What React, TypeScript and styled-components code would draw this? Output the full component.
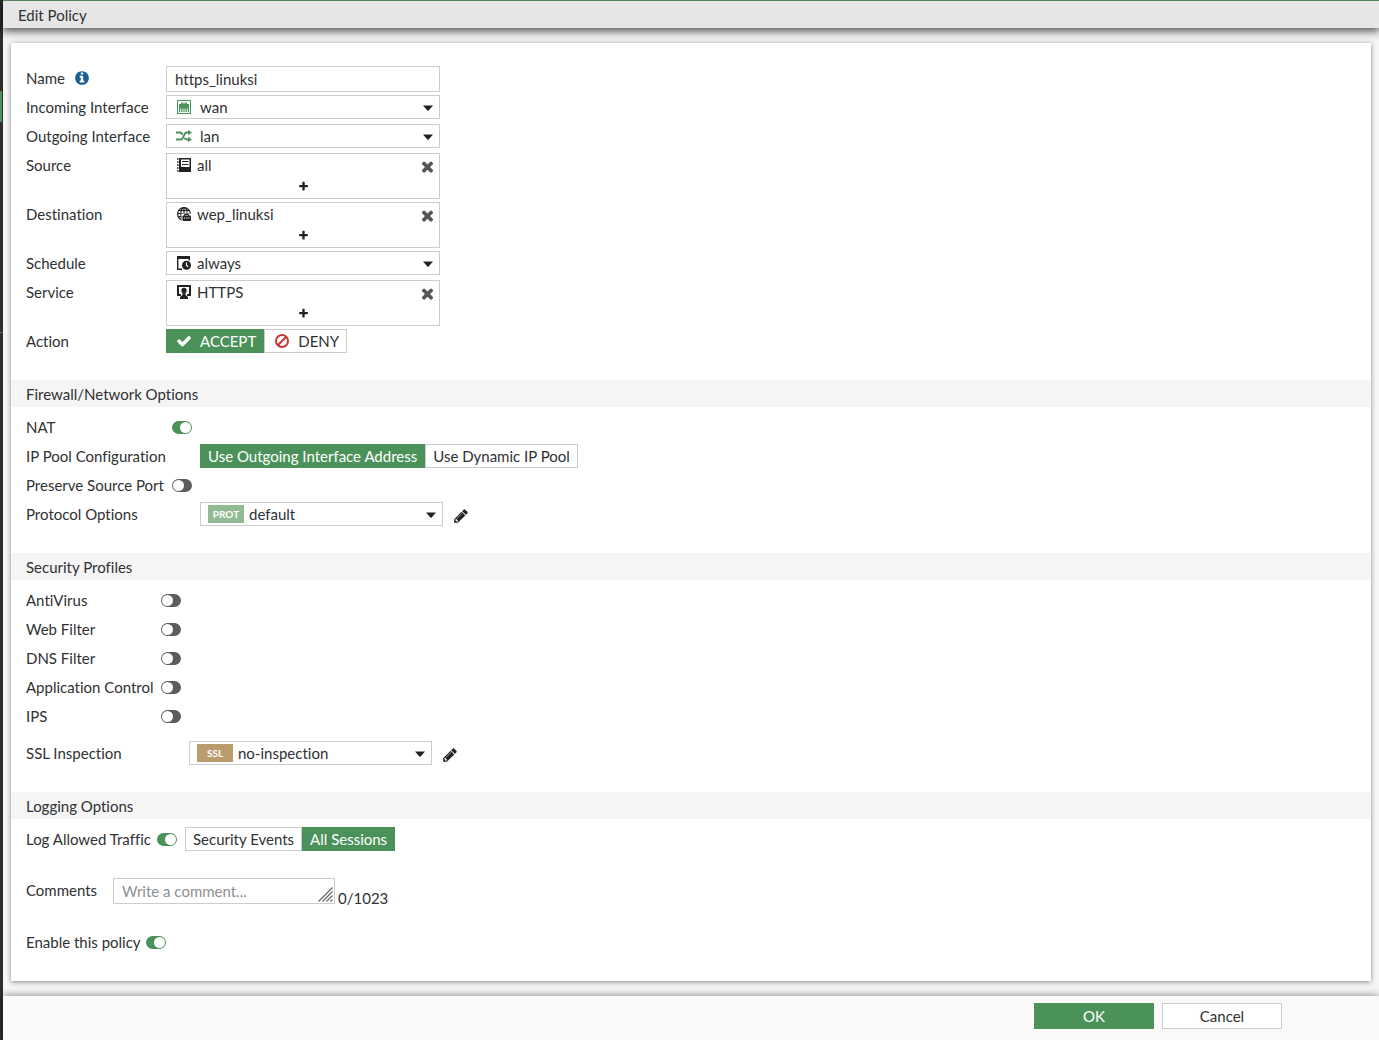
import React, { useState } from "react";
import styled, { createGlobalStyle, css } from "styled-components";

const color = {
  text: "#2f3133",
  green: "#4a925a",
  border: "#cccccc",
  off: "#5c5c5c",
};

const GlobalStyle = createGlobalStyle`
  *, *::before, *::after { box-sizing: border-box; }
  body {
    margin: 0;
    background: #f6f6f6;
    color: ${color.text};
    font: 15px/24px Lato, "Liberation Sans", sans-serif;
    font-variant-ligatures: none;
  }
  button, input, select, textarea { font: inherit; color: inherit; }
`;

const Shell = styled.div`
  display: flex;
  min-height: 100vh;
`;

const Rail = styled.nav`
  flex: none;
  width: 3px;
  padding-top: 91px;
  background: #2d2d2d;
`;

const RailMarker = styled.div`
  width: 2px;
  height: 31px;
  background: ${color.green};
`;

const RailDivider = styled.div`
  width: 2px;
  height: 1px;
  margin-top: 210px;
  background: #777;
`;

const Page = styled.div`
  flex: 1;
  min-width: 0;
  display: flex;
  flex-direction: column;
`;

const Header = styled.header`
  height: 28px;
  padding: 2px 15px;
  border-top: 1px solid #54845f;
  background: #e6e6e6;
  box-shadow: 0 2px 10px 1px rgba(0, 0, 0, 0.7);
  z-index: 1;
`;

const Title = styled.h1`
  margin: 0;
  font-size: 15px;
  font-weight: 400;
`;

const Main = styled.main`
  flex: 1;
  padding: 15px 8px;
`;

const Card = styled.form`
  padding-top: 23px;
  background: #fff;
  box-shadow: 0 1px 5px rgba(0, 0, 0, 0.45);
`;

const Section = styled.section`
  padding: 0 15px 22px;
`;

const SectionTitle = styled.h2`
  margin: 0 -15px 8px;
  padding: 2px 15px 1px;
  background: #f5f5f5;
  font-size: 15px;
  font-weight: 400;
`;

const Row = styled.div<{ $before?: number }>`
  display: flex;
  align-items: flex-start;
  min-height: 29px;
  padding-bottom: 3px;
  margin-top: ${(p) => p.$before ?? 0}px;
`;

const labelStyle = css<{ $width: number }>`
  flex: none;
  width: ${(p) => p.$width}px;
  white-space: nowrap;
`;

const Label = styled.label<{ $width: number }>`
  ${labelStyle}
`;

const Caption = styled.span<{ $width: number }>`
  ${labelStyle}
`;

const InfoButton = styled.button`
  display: inline-flex;
  margin-left: 9px;
  padding: 0;
  border: 0;
  background: none;
  color: #1d5f94;
  vertical-align: -2px;
`;

const TextInput = styled.input`
  width: 274px;
  height: 26px;
  padding: 0 8px;
  border: 1px solid ${color.border};
  background: #fff;
  outline: 0;
`;

const SelectBox = styled.div<{ $width: number; $gap: number }>`
  display: flex;
  align-items: center;
  gap: ${(p) => p.$gap}px;
  width: ${(p) => p.$width}px;
  height: 24px;
  padding: 0 6px 0 7px;
  border: 1px solid ${color.border};
  background: #fff;

  select {
    flex: 1;
    min-width: 0;
    height: 22px;
    padding: 0;
    border: 0;
    background: none;
    line-height: 20px;
    appearance: none;
    outline: 0;
  }
`;

const IconSlot = styled.span`
  flex: none;
  display: flex;
  justify-content: center;
  width: 20px;
`;

const PickBox = styled.div`
  width: 274px;
  height: 46px;
  padding: 0 3px 0 7px;
  border: 1px solid ${color.border};
  background: #fff;
`;

const PickItem = styled.div`
  display: flex;
  align-items: center;
  gap: 3px;
  height: 22px;
`;

const PickName = styled.span`
  flex: 1;
`;

const IconButton = styled.button`
  display: flex;
  align-items: center;
  justify-content: center;
  padding: 0;
  border: 0;
  background: none;
  cursor: pointer;
`;

const RemoveButton = styled(IconButton)`
  height: 22px;
  padding-top: 3px;
  color: #555;
`;

const AddButton = styled(IconButton)`
  width: 100%;
  height: 20px;
  padding-right: 4px;
  color: #222;
`;

const EditButton = styled(IconButton)`
  width: 16px;
  height: 26px;
  margin-left: 10px;
  padding-top: 2px;
  color: #222;
`;

const Toggle = styled.input`
  flex: none;
  appearance: none;
  width: 20px;
  height: 13px;
  margin: 6px 8px 0 0;
  padding: 1px;
  border-radius: 7px;
  background: ${color.off};

  &::before {
    content: "";
    display: block;
    width: 11px;
    height: 11px;
    border-radius: 50%;
    background: #fff;
  }

  &:checked {
    background: ${color.green};
  }

  &:checked::before {
    margin-left: auto;
  }
`;

const Segments = styled.div`
  display: flex;
`;

const Segment = styled.label<{ $active: boolean }>`
  display: flex;
  align-items: center;
  gap: 6px;
  height: 24px;
  padding: 0 7px;
  border: 1px solid ${(p) => (p.$active ? color.green : color.border)};
  background: ${(p) => (p.$active ? color.green : "#fff")};
  color: ${(p) => (p.$active ? "#fff" : color.text)};
  white-space: nowrap;
  cursor: pointer;

  input {
    appearance: none;
    position: absolute;
    margin: 0;
  }
`;

const Badge = styled.span<{ $fill: string }>`
  flex: none;
  width: 36px;
  height: 18px;
  background: ${(p) => p.$fill};
  color: #fff;
  font-size: 10px;
  font-weight: 700;
  line-height: 18px;
  text-align: center;
`;

const CommentBox = styled.div`
  position: relative;
  display: flex;
  margin-right: 3px;

  textarea {
    width: 222px;
    height: 26px;
    padding: 0 8px;
    border: 1px solid ${color.border};
    background: #fff;
    resize: none;
    outline: 0;
    overflow: hidden;
  }

  textarea::placeholder {
    color: #8f8f8f;
  }

  svg {
    position: absolute;
    right: 2px;
    bottom: 2px;
    pointer-events: none;
  }
`;

const Counter = styled.span`
  padding-top: 8px;
`;

const Footer = styled.footer`
  display: flex;
  justify-content: flex-end;
  gap: 8px;
  height: 44px;
  padding: 7px 97px 0 15px;
  background: #fafafa;
  box-shadow: 0 0 8px rgba(0, 0, 0, 0.5);
  z-index: 1;
`;

const FooterButton = styled.button<{ $primary?: boolean }>`
  width: 120px;
  height: 26px;
  padding: 0;
  border: 1px solid ${(p) => (p.$primary ? color.green : color.border)};
  background: ${(p) => (p.$primary ? color.green : "#fff")};
  color: ${(p) => (p.$primary ? "#fff" : color.text)};
  line-height: 24px;
`;

const CaretIcon = styled.svg`
  flex: none;
  margin-top: 2px;
`;

const Caret = () => (
  <CaretIcon width="10" height="6" viewBox="0 0 10 6" aria-hidden="true">
    <path d="M0 .5h10L5.600 5.400q-.6.6-1.200 0Z" fill="#222" />
  </CaretIcon>
);

const glyphs = {
  info: "M1152 1376v-160q0-14-9-23t-23-9h-96v-512q0-14-9-23t-23-9h-320q-14 0-23 9t-9 23v160q0 14 9 23t23 9h96v320h-96q-14 0-23 9t-9 23v160q0 14 9 23t23 9h448q14 0 23-9t9-23zm-128-896v-160q0-14-9-23t-23-9h-192q-14 0-23 9t-9 23v160q0 14 9 23t23 9h192q14 0 23-9t9-23zm640 416q0 209-103 385.500t-279.500 279.500-385.500 103-385.500-103-279.500-279.500-103-385.500 103-385.500 279.500-279.500 385.500-103 385.500 103 279.500 279.500 103 385.500z",
  check: "M1671 566q0 40-28 68l-724 724-136 136q-28 28-68 28t-68-28l-136-136-362-362q-28-28-28-68t28-68l136-136q28-28 68-28t68 28l294 295 656-657q28-28 68-28t68 28l136 136q28 28 28 68z",
  times: "M1490 1322q0 40-28 68l-136 136q-28 28-68 28t-68-28l-294-294-294 294q-28 28-68 28t-68-28l-136-136q-28-28-28-68t28-68l294-294-294-294q-28-28-28-68t28-68l136-136q28-28 68-28t68 28l294 294 294-294q28-28 68-28t68 28l136 136q28 28 28 68t-28 68l-294 294 294 294q28 28 28 68z",
  plus: "M1600 736v192q0 40-28 68t-68 28h-416v416q0 40-28 68t-68 28h-192q-40 0-68-28t-28-68v-416h-416q-40 0-68-28t-28-68v-192q0-40 28-68t68-28h416v-416q0-40 28-68t68-28h192q40 0 68 28t28 68v416h416q40 0 68 28t28 68z",
  pencil: "M491 1536l91-91-235-235-91 91v107h128v128h107zm523-928q0-22-22-22-10 0-17 7l-542 542q-7 7-7 17 0 22 22 22 10 0 17-7l542-542q7-7 7-17zm-54-192l416 416-832 832h-416v-416zm683 96q0 53-37 90l-166 166-416-416 166-165q36-38 90-38 53 0 91 38l235 234q37 39 37 91z",
};

const Glyph = ({ name, size }: { name: keyof typeof glyphs; size: number }) => (
  <svg width={size} height={size} viewBox="0 0 1792 1792" fill="currentColor" aria-hidden="true">
    <path d={glyphs[name]} />
  </svg>
);

const PortIcon = () => (
  <svg width="14" height="14" viewBox="0 0 14 14" aria-hidden="true">
    <rect x=".5" y=".5" width="13" height="13" fill="#fff" stroke={color.green} />
    <path d="M2 5V4h2V2.500h1.500v1h1V2.500h1v1h1V2.500H10V4h2v4.500H2Z" fill={color.green} />
    <path d="M2.500 8v4M4.750 8v4M7 8v4M9.250 8v4M11.500 8v4" stroke={color.green} strokeWidth="1.300" />
  </svg>
);

const ShuffleIcon = () => (
  <svg width="16" height="12" viewBox="0 0 16 12" aria-hidden="true">
    <g fill="none" stroke={color.green} strokeWidth="2">
      <path d="M0 2.600h4.200q1 0 1.500.8l.8 1.200" />
      <path d="M0 9.400h5q1 0 1.500-1l2.400-4.800q.5-1 1.500-1H13" />
      <path d="M8.600 7.800l.6.900q.5.700 1.500.7H13" />
    </g>
    <path d="M12 0l4 2.600-4 2.600ZM12 6.800l4 2.600-4 2.600Z" fill={color.green} />
  </svg>
);

const AddressIcon = () => (
  <svg width="14" height="14" viewBox="0 0 14 14" aria-hidden="true">
    <path d="M2 0h12v14H2Z" fill="#222" />
    <path d="M4 1.500h8.500v7.500H4Z" fill="#fff" />
    <path d="M5 3.500h6.500M5 6.500h6.500" stroke="#222" />
    <path d="M0 1h1.500M0 4h1.500M0 7h1.500M0 10h1.500M0 13h1.500" stroke="#222" strokeWidth="1.500" />
  </svg>
);

const HostIcon = () => (
  <svg width="14" height="14" viewBox="0 0 14 14" aria-hidden="true">
    <g fill="none" stroke="#222" strokeWidth="1.200">
      <circle cx="7" cy="7" r="6.400" />
      <ellipse cx="7" cy="7" rx="3.200" ry="6.400" />
      <path d="M.6 6.500h12.800M1.500 3.500h11M1.500 9.500h5M7 .6v12" />
    </g>
    <path d="M4.500 6.500H14V14H4.500Z" fill="#fff" />
    <path d="M7.500 9V7.500h4V9" fill="none" stroke="#222" />
    <rect x="5.500" y="8.500" width="8.500" height="5.500" rx=".8" fill="#222" />
    <path d="M7 11h1.200M9.200 11h1.200M11.400 11h1.200" stroke="#fff" strokeWidth="1.200" />
  </svg>
);

const ScheduleIcon = () => (
  <svg width="14" height="14" viewBox="0 0 14 14" aria-hidden="true">
    <path d="M.7 1v12.300H5M12.300 1v3.500" fill="none" stroke="#222" strokeWidth="1.400" />
    <path d="M0 0h13v3H0Z" fill="#222" />
    <circle cx="9.500" cy="9.300" r="4.500" fill="#222" />
    <path d="M9.500 6.500v3l1.800 1.200" fill="none" stroke="#fff" strokeWidth="1.200" />
  </svg>
);

const ServiceIcon = () => (
  <svg width="14" height="14" viewBox="0 0 14 14" aria-hidden="true">
    <path d="M4 10H1V1h12v9h-3" fill="none" stroke="#222" strokeWidth="2" />
    <path d="M4.300 5.500a2.700 2.700 0 0 1 5.400 0q0 1.600-1.200 2.500v2l2.500 2V14H3v-2l2.500-2V8Q4.300 7.100 4.300 5.500Z" fill="#222" />
  </svg>
);

const BanIcon = () => (
  <svg width="14" height="14" viewBox="0 0 14 14" aria-hidden="true">
    <circle cx="7" cy="7" r="6" fill="none" stroke="#c23a36" strokeWidth="2" />
    <path d="M2.800 11.200 11.200 2.800" stroke="#c23a36" strokeWidth="2" />
  </svg>
);

const Grip = () => (
  <svg width="15" height="15" viewBox="0 0 15 15" aria-hidden="true">
    <path d="M.5 14.500 14.500.5M4.500 14.500l10-10M8.500 14.500l6-6M12.500 14.500l2-2" stroke="#666" strokeWidth="1.200" />
  </svg>
);

type SelectProps = {
  id: string;
  value: string;
  lead: React.ReactNode;
  width?: number;
  gap?: number;
};

const Select = ({ id, value, lead, width = 274, gap = 3 }: SelectProps) => (
  <SelectBox $width={width} $gap={gap}>
    {lead}
    <select id={id} defaultValue={value}>
      <option>{value}</option>
    </select>
    <Caret />
  </SelectBox>
);

const Picker = ({ label, value, icon }: { label: string; value: string; icon: React.ReactNode }) => (
  <Row>
    <Caption $width={140}>{label}</Caption>
    <PickBox role="group" aria-label={label}>
      <PickItem>
        <IconSlot>{icon}</IconSlot>
        <PickName>{value}</PickName>
        <RemoveButton type="button" aria-label={`Remove ${value}`}>
          <Glyph name="times" size={17} />
        </RemoveButton>
      </PickItem>
      <AddButton type="button" aria-label={`Add ${label}`}>
        <Glyph name="plus" size={11} />
      </AddButton>
    </PickBox>
  </Row>
);

type Choice = { name: string; icon?: React.ReactNode };

const Choices = ({ label, items, initial }: { label: string; items: Choice[]; initial: string }) => {
  const [picked, setPicked] = useState(initial);
  return (
    <Segments role="radiogroup" aria-label={label}>
      {items.map((item) => (
        <Segment key={item.name} $active={picked === item.name}>
          <input
            type="radio"
            name={label}
            checked={picked === item.name}
            onChange={() => setPicked(item.name)}
          />
          {item.icon && <IconSlot>{item.icon}</IconSlot>}
          {item.name}
        </Segment>
      ))}
    </Segments>
  );
};

type ToggleRowProps = {
  id: string;
  label: string;
  width: number;
  on?: boolean;
  before?: number;
  children?: React.ReactNode;
};

const ToggleRow = ({ id, label, width, on = false, before, children }: ToggleRowProps) => (
  <Row $before={before}>
    <Label htmlFor={id} $width={width}>
      {label}
    </Label>
    <Toggle id={id} type="checkbox" role="switch" defaultChecked={on} />
    {children}
  </Row>
);

const profiles = ["AntiVirus", "Web Filter", "DNS Filter", "Application Control", "IPS"];

export default function App() {
  const [comment, setComment] = useState("");

  return (
    <>
      <GlobalStyle />
      <Shell>
        <Rail aria-label="Main menu">
          <RailMarker />
          <RailDivider />
        </Rail>
        <Page>
          <Header>
            <Title>Edit Policy</Title>
          </Header>
          <Main>
            <Card id="policy" onSubmit={(e) => e.preventDefault()}>
              <Section>
                <Row>
                  <Caption $width={140}>
                    <label htmlFor="name">Name</label>
                    <InfoButton type="button" aria-label="About the name">
                      <Glyph name="info" size={16} />
                    </InfoButton>
                  </Caption>
                  <TextInput id="name" defaultValue="https_linuksi" spellCheck={false} />
                </Row>
                <Row>
                  <Label htmlFor="incoming" $width={140}>Incoming Interface</Label>
                  <Select id="incoming" value="wan" gap={6} lead={<IconSlot><PortIcon /></IconSlot>} />
                </Row>
                <Row>
                  <Label htmlFor="outgoing" $width={140}>Outgoing Interface</Label>
                  <Select id="outgoing" value="lan" gap={6} lead={<IconSlot><ShuffleIcon /></IconSlot>} />
                </Row>
                <Picker label="Source" value="all" icon={<AddressIcon />} />
                <Picker label="Destination" value="wep_linuksi" icon={<HostIcon />} />
                <Row>
                  <Label htmlFor="schedule" $width={140}>Schedule</Label>
                  <Select id="schedule" value="always" lead={<IconSlot><ScheduleIcon /></IconSlot>} />
                </Row>
                <Picker label="Service" value="HTTPS" icon={<ServiceIcon />} />
                <Row>
                  <Caption $width={140}>Action</Caption>
                  <Choices
                    label="Action"
                    initial="ACCEPT"
                    items={[
                      { name: "ACCEPT", icon: <Glyph name="check" size={16} /> },
                      { name: "DENY", icon: <BanIcon /> },
                    ]}
                  />
                </Row>
              </Section>

              <Section>
                <SectionTitle>Firewall/Network Options</SectionTitle>
                <ToggleRow id="nat" label="NAT" width={146} on />
                <Row>
                  <Caption $width={174}>IP Pool Configuration</Caption>
                  <Choices
                    label="IP Pool Configuration"
                    initial="Use Outgoing Interface Address"
                    items={[{ name: "Use Outgoing Interface Address" }, { name: "Use Dynamic IP Pool" }]}
                  />
                </Row>
                <ToggleRow id="preserve" label="Preserve Source Port" width={146} />
                <Row>
                  <Label htmlFor="protocol" $width={174}>Protocol Options</Label>
                  <Select id="protocol" value="default" width={243} gap={5} lead={<Badge $fill="#92bb93">PROT</Badge>} />
                  <EditButton type="button" aria-label="Edit protocol options">
                    <Glyph name="pencil" size={16} />
                  </EditButton>
                </Row>
              </Section>

              <Section>
                <SectionTitle>Security Profiles</SectionTitle>
                {profiles.map((name) => (
                  <ToggleRow key={name} id={name.replace(" ", "-")} label={name} width={135} />
                ))}
                <Row $before={8}>
                  <Label htmlFor="ssl" $width={163}>SSL Inspection</Label>
                  <Select id="ssl" value="no-inspection" width={243} gap={5} lead={<Badge $fill="#bb9c6c">SSL</Badge>} />
                  <EditButton type="button" aria-label="Edit SSL inspection">
                    <Glyph name="pencil" size={16} />
                  </EditButton>
                </Row>
              </Section>

              <Section>
                <SectionTitle>Logging Options</SectionTitle>
                <ToggleRow id="log" label="Log Allowed Traffic" width={131} on>
                  <Choices
                    label="Log Allowed Traffic"
                    initial="All Sessions"
                    items={[{ name: "Security Events" }, { name: "All Sessions" }]}
                  />
                </ToggleRow>
                <Row $before={22}>
                  <Label htmlFor="comments" $width={87}>Comments</Label>
                  <CommentBox>
                    <textarea
                      id="comments"
                      placeholder="Write a comment..."
                      maxLength={1023}
                      value={comment}
                      onChange={(e) => setComment(e.target.value)}
                    />
                    <Grip />
                  </CommentBox>
                  <Counter>{comment.length}/1023</Counter>
                </Row>
                <ToggleRow id="enabled" label="Enable this policy" width={120} before={17} on />
              </Section>
            </Card>
          </Main>
          <Footer>
            <FooterButton type="submit" form="policy" $primary>OK</FooterButton>
            <FooterButton type="button">Cancel</FooterButton>
          </Footer>
        </Page>
      </Shell>
    </>
  );
}
